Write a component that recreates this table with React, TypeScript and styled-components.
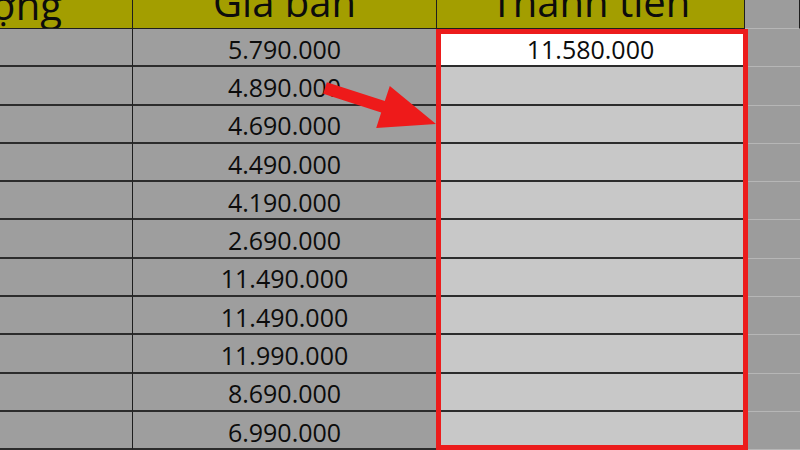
import React from 'react';
import styled, { createGlobalStyle } from 'styled-components';

const GlobalStyle = createGlobalStyle`
  html, body {
    margin: 0;
    padding: 0;
    overflow: hidden;
    background: #9e9e9e;
  }
`;

const prices = [
  '5.790.000',
  '4.890.000',
  '4.690.000',
  '4.490.000',
  '4.190.000',
  '2.690.000',
  '11.490.000',
  '11.490.000',
  '11.990.000',
  '8.690.000',
  '6.990.000',
];

const Sheet = styled.div`
  position: relative;
  width: 800px;
  height: 450px;
  overflow: hidden;
  display: grid;
  grid-template-columns: 133px 304px 308px 55px;
  grid-template-rows: 29px repeat(11, 38.3px);
  font-family: "Open Sans", "Noto Sans", sans-serif;
  color: #0c0c0c;
`;

// header labels are cut off by the top of the window, like the zoomed sheet
const HeaderCell = styled.div<{ $align?: 'center' | 'end'; $blank?: boolean }>`
  box-sizing: border-box;
  display: flex;
  align-items: flex-start;
  justify-content: ${(p) => (p.$align === 'end' ? 'flex-end' : 'center')};
  padding-right: ${(p) => (p.$align === 'end' ? '70px' : '0')};
  background: ${(p) => (p.$blank ? '#9c9c9c' : '#a39e00')};
  border-right: 1px solid #1e1e1e;
  border-bottom: 1px solid ${(p) => (p.$blank ? '#b6b6b6' : '#1e1e1e')};
  overflow: hidden;
  white-space: nowrap;
  font-size: 40px;
  line-height: ${(p) => (p.$align === 'end' ? '9px' : '3px')};
`;

const Cell = styled.div<{ $tone: 'gray' | 'light' | 'white' | 'side' }>`
  box-sizing: border-box;
  display: flex;
  align-items: center;
  justify-content: center;
  padding-top: 3px;
  font-size: 25px;
  white-space: nowrap;
  background: ${(p) =>
    p.$tone === 'white' ? '#ffffff' : p.$tone === 'light' ? '#c8c8c8' : p.$tone === 'side' ? '#9c9c9c' : '#9e9e9e'};
  border-right: ${(p) => (p.$tone === 'side' ? '0' : '1px solid #1e1e1e')};
  border-bottom: ${(p) => (p.$tone === 'side' ? '1px solid #b6b6b6' : '2px solid #2c2c2c')};
`;

const Selection = styled.div`
  position: absolute;
  left: 436px;
  top: 29px;
  width: 312px;
  height: 421px;
  box-sizing: border-box;
  border: 5px solid #ec1c1c;
  pointer-events: none;
`;

const Overlay = styled.svg`
  position: absolute;
  left: 0;
  top: 0;
  pointer-events: none;
`;

export default function App() {
  return (
    <>
      <GlobalStyle />
      <Sheet>
        <HeaderCell $align="end">Số lượng</HeaderCell>
        <HeaderCell>Giá bán</HeaderCell>
        <HeaderCell>Thành tiền</HeaderCell>
        <HeaderCell $blank />
        {prices.map((price, i) => (
          <React.Fragment key={i}>
            <Cell $tone="gray" />
            <Cell $tone="gray">{price}</Cell>
            <Cell $tone={i === 0 ? 'white' : 'light'}>{i === 0 ? '11.580.000' : ''}</Cell>
            <Cell $tone="side" />
          </React.Fragment>
        ))}
        <Selection />
        <Overlay width="800" height="450" viewBox="0 0 800 450">
          <polygon
            fill="#ee1a1a"
            points="326.8,82.3 384.8,101.1 389.8,85.9 436,124 376.2,127.9 381.2,112.5 323.2,93.7"
          />
        </Overlay>
      </Sheet>
    </>
  );
}
